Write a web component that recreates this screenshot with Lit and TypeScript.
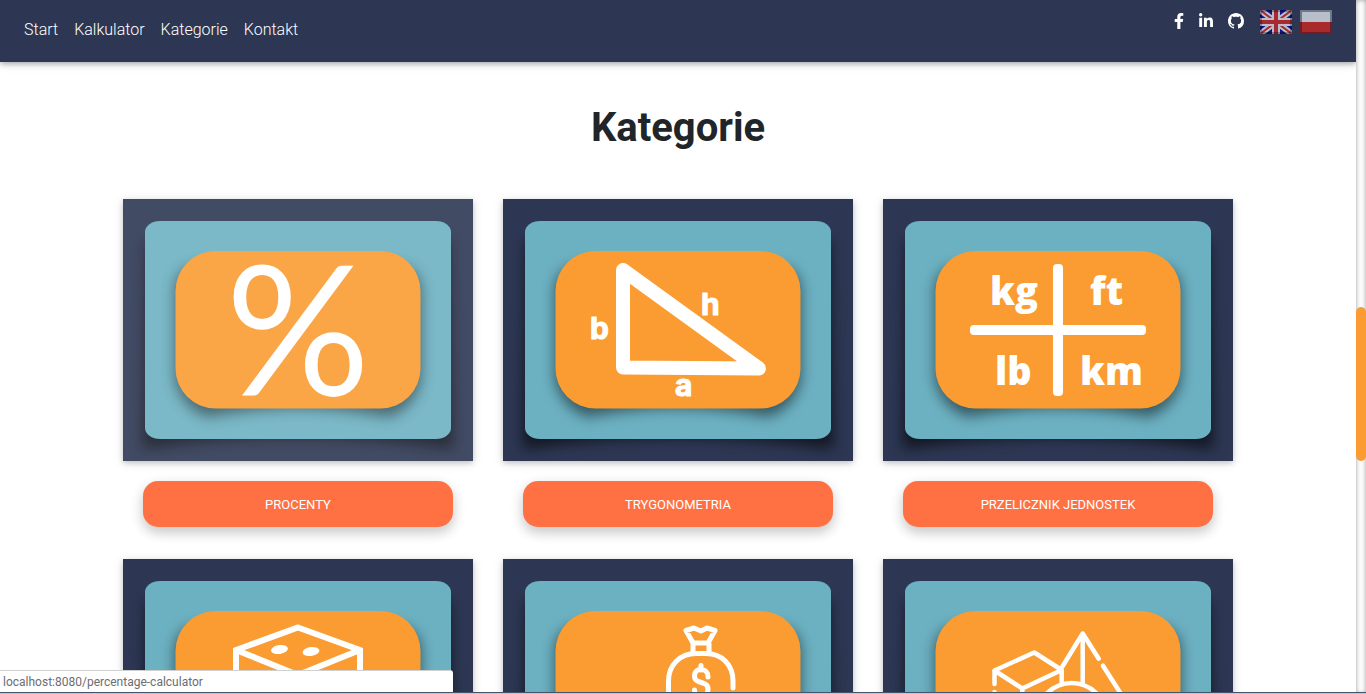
import { LitElement, html, svg, css, nothing } from "lit";
import { customElement, property } from "lit/decorators.js";

const percentArt = svg`<text class="percent" x="175" y="196" text-anchor="middle">%</text>`;

const triangleArt = svg`
  <path class="stroke" stroke-width="14" d="M120 71V168.500L256 169.500Z"/>
  <text class="side" x="87" y="140">b</text>
  <text class="side" x="198" y="116">h</text>
  <text class="side" x="172" y="197">a</text>`;

const unitsArt = svg`
  <rect class="fill" x="170" y="65" width="10" height="132" rx="4"/>
  <rect class="fill" x="87" y="126" width="176" height="10" rx="4"/>
  <text class="unit" x="107" y="106">kg</text>
  <text class="unit" x="207" y="106">ft</text>
  <text class="unit" x="112" y="186">lb</text>
  <text class="unit" x="197" y="186">km</text>`;

const dieArt = svg`
  <path class="miter" stroke-width="6" d="M175 68.500L237 91V166L175 192L113 166V91ZM113 91L175 116L237 91M175 116V192"/>
  <ellipse class="fill" cx="156.500" cy="90.500" rx="8.500" ry="4.500" transform="rotate(-8 156.500 90.500)"/>
  <ellipse class="fill" cx="188" cy="92.500" rx="8.500" ry="4.500" transform="rotate(-8 188 92.500)"/>`;

const bagArt = svg`
  <path class="stroke" stroke-width="5" d="M190 84L183 71.500L191 69L198 72L204 69L212 71.500L205 84ZM190 84V94M206 84V94"/>
  <path class="stroke" stroke-width="5" d="M165.500 165V122C165.500 106 177 94.500 193 94.500H203C219 94.500 230 106 230 122V129M165.500 165C165.500 184 230 184 230 165V140"/>
  <path class="stroke" stroke-width="5" d="M198 106.500V111M205 118C205 108 191.500 108 191.500 117C191.500 126 205 121 205 130C205 140 191.500 139 191.500 131M198 138V142"/>`;

const solidsArt = svg`
  <path class="stroke" stroke-width="4.500" d="M178.500 109L199.700 74.500L215.700 99.700M220 106.700L238 135M199.700 75V124M111.500 125V111.500L151.300 93.500L178.700 111V124M111.500 111.500L139.300 129.500L178.700 111M139.300 129.500V170M111.500 133V155L139.300 170"/>
  <circle class="stroke" stroke-width="4.500" cx="188.700" cy="159" r="35"/>`;

interface Category {
  name: string;
  label?: string;
  href: string;
  art: unknown;
  active?: boolean;
}

const categories: Category[] = [
  { name: "Procenty", label: "Procenty", href: "#percentage-calculator", art: percentArt, active: true },
  { name: "Trygonometria", label: "Trygonometria", href: "#trigonometry", art: triangleArt },
  { name: "Przelicznik jednostek", label: "Przelicznik jednostek", href: "#units", art: unitsArt },
  { name: "", href: "#probability", art: dieArt },
  { name: "", href: "#finance", art: bagArt },
  { name: "", href: "#geometry", art: solidsArt },
];

@customElement("category-card")
export class CategoryCard extends LitElement {
  @property({ attribute: false }) category!: Category;

  static styles = css`
    :host { display: flex; flex-direction: column; gap: 20px; }
    .picture {
      display: block;
      background: #2d3753;
      box-shadow: 0 2px 5px rgba(0, 0, 0, 0.16), 0 2px 10px rgba(0, 0, 0, 0.12);
    }
    svg { display: block; width: 100%; height: auto; }
    .fill, text { fill: #fff; }
    .stroke { fill: none; stroke: #fff; stroke-linejoin: round; stroke-linecap: round; }
    .miter { fill: none; stroke: #fff; stroke-linejoin: miter; }
    .percent { font: 400 180px Lato, sans-serif; }
    .side { font: 700 30px Inter, sans-serif; stroke: #fff; stroke-width: 1px; stroke-linejoin: round; }
    .unit { font: 800 38px "Open Sans", sans-serif; }
    .button {
      margin: 0 20px;
      border: 0;
      border-radius: 15px;
      padding: 15px 16px 13px;
      background: #ff7043;
      color: #fff;
      font: 400 13px/18px Roboto, sans-serif;
      text-transform: uppercase;
      box-shadow: 0 6px 12px rgba(0, 0, 0, 0.14), 0 4px 15px rgba(0, 0, 0, 0.1);
      cursor: pointer;
    }
  `;

  render() {
    const { name, label, href, art, active } = this.category;
    return html`
      <a class="picture" href=${href} aria-label=${name || nothing}>
        <svg viewBox="0 0 350 262" aria-hidden="true">
          <defs>
            <filter id="soft" x="-20%" y="-20%" width="140%" height="140%">
              <feGaussianBlur stdDeviation="7"/>
            </filter>
          </defs>
          <path filter="url(#soft)" opacity="0.600" d="M24 42H326L330 250Q175 226 20 250Z"/>
          <rect x="22" y="22" width="306" height="218" rx="15" ry="11" fill="#6cb1c2"/>
          <path filter="url(#soft)" opacity="0.500" d="M70 68H280Q296 72 298 90V180Q292 208 266 218Q175 200 84 218Q58 208 52 180V90Q54 72 70 68Z"/>
          <rect x="52.500" y="52" width="245" height="157.500" rx="40" ry="40" fill="#fa9c32"/>
          ${art}
          ${active ? svg`<rect width="350" height="262" fill="#fff" opacity="0.100"/>` : nothing}
        </svg>
      </a>
      ${label ? html`<button class="button" type="button">${label}</button>` : nothing}
    `;
  }
}

@customElement("app-root")
export class AppRoot extends LitElement {
  static styles = css`
    :host {
      display: grid;
      grid-template-columns: minmax(0, 1fr) 10px;
      height: 100vh;
      overflow: hidden;
      position: relative;
      background: #fff;
      color: #212529;
      font-family: Roboto, sans-serif;
    }
    .page { display: flex; flex-direction: column; min-height: 0; overflow: hidden; }
    .bar {
      display: flex;
      flex: none;
      justify-content: space-between;
      align-items: flex-start;
      box-sizing: border-box;
      height: 62px;
      padding: 10px 24px;
      background: #2d3753;
      box-shadow: 0 2px 5px rgba(0, 0, 0, 0.26), 0 2px 10px rgba(0, 0, 0, 0.12);
    }
    .links { display: flex; gap: 16px; padding-top: 8px; }
    .links a { color: #fff; font-weight: 300; font-size: 16px; line-height: 24px; text-decoration: none; }
    .tools { display: flex; gap: 8px; }
    .social { display: flex; gap: 15px; padding: 2px 8px 0 0; }
    .social a, .flag { display: block; }
    .social svg, .flag svg { display: block; }
    .social svg { height: 16px; width: auto; fill: #fff; margin-top: 1px; }
    .flag { border: 0; padding: 0; background: none; cursor: pointer; }
    .content {
      width: 100%;
      max-width: 1140px;
      box-sizing: border-box;
      margin: 0 auto;
      padding: 42px 15px 0;
    }
    .title { margin: 0 0 47px; text-align: center; font-weight: 700; font-size: 40px; line-height: 48px; }
    .grid { display: grid; grid-template-columns: repeat(3, minmax(0, 1fr)); gap: 32px 30px; }
    .track { display: flex; justify-content: center; background: #fff; box-shadow: inset 0 0 5px rgba(0, 0, 0, 0.4); }
    .thumb { width: 10px; height: 154px; margin-top: 307px; border-radius: 5px; background: #fa9c32; }
    .status {
      position: absolute;
      left: 0;
      bottom: 2px;
      box-sizing: border-box;
      width: 453px;
      padding: 2px 3px 1px;
      border-top: 1px solid #d0d0d0;
      border-top-right-radius: 3px;
      background: #fff;
      color: #6b6e72;
      font: 400 12px/18px Roboto, sans-serif;
    }
    .edge {
      position: absolute;
      left: 0;
      right: 0;
      bottom: 0;
      height: 1px;
      border-top: 1px solid #44546a;
      background: #b9c9dc;
    }
  `;

  render() {
    return html`
      <div class="page">
        <header class="bar">
          <nav class="links">
            <a href="#start">Start</a>
            <a href="#calculator">Kalkulator</a>
            <a href="#categories">Kategorie</a>
            <a href="#contact">Kontakt</a>
          </nav>
          <div class="tools">
            <div class="social">
              <a href="#facebook" aria-label="Facebook">
                <svg viewBox="0 0 320 512"><path d="M279.140 288l14.220-92.660h-88.910v-60.130c0-25.350 12.420-50.060 52.240-50.060h40.420V6.260S260.430 0 225.360 0c-73.220 0-121.080 44.380-121.080 124.720v70.620H22.890V288h81.390v224h100.170V288z"/></svg>
              </a>
              <a href="#linkedin" aria-label="LinkedIn">
                <svg viewBox="0 0 448 512"><path d="M100.280 448H7.400V148.900h92.880zM53.790 108.100C24.090 108.100 0 83.500 0 53.800a53.790 53.790 0 0 1 107.580 0c0 29.700-24.100 54.300-53.790 54.300zM447.900 448h-92.680V302.400c0-34.700-.7-79.200-48.290-79.200-48.290 0-55.690 37.700-55.690 76.700V448h-92.780V148.900h89.080v40.800h1.300c12.400-23.500 42.690-48.300 87.880-48.300 94 0 111.280 61.900 111.280 142.300V448z"/></svg>
              </a>
              <a href="#github" aria-label="GitHub">
                <svg viewBox="0 0 16 16"><path d="M8 0C3.580 0 0 3.580 0 8c0 3.540 2.290 6.530 5.470 7.590.4.070.55-.17.55-.38 0-.19-.01-.82-.01-1.490-2.010.37-2.530-.49-2.690-.94-.09-.23-.48-.94-.82-1.130-.28-.15-.68-.52-.01-.53.63-.01 1.080.58 1.230.82.72 1.210 1.870.87 2.330.66.07-.52.28-.87.51-1.070-1.780-.2-3.640-.89-3.640-3.950 0-.87.31-1.590.82-2.150-.08-.2-.36-1.020.08-2.120 0 0 .67-.21 2.200.82.64-.18 1.320-.27 2-.27s1.360.09 2 .27c1.530-1.040 2.200-.82 2.200-.82.44 1.100.16 1.920.08 2.120.51.56.82 1.270.82 2.150 0 3.070-1.870 3.750-3.650 3.950.29.25.54.73.54 1.480 0 1.070-.01 1.930-.01 2.200 0 .21.15.46.55.38A8.010 8.010 0 0 0 16 8c0-4.420-3.580-8-8-8z"/></svg>
              </a>
            </div>
            <button class="flag" type="button" aria-label="English">
              <svg width="32" height="24" viewBox="0 0 32 24">
                <clipPath id="uk"><rect width="32" height="24" rx="2"/></clipPath>
                <g clip-path="url(#uk)">
                  <rect width="32" height="24" fill="#14148c"/>
                  <path d="M0 0L32 24M32 0L0 24" stroke="#b8bfca" stroke-width="6"/>
                  <path d="M0 0L32 24M32 0L0 24" stroke="#a82a30" stroke-width="2"/>
                  <path d="M16 0V24M0 12H32" stroke="#b8bfca" stroke-width="8"/>
                  <path d="M16 0V24M0 12H32" stroke="#a82a30" stroke-width="4"/>
                  <rect x="1" y="1" width="30" height="22" fill="none" stroke="#000" stroke-opacity="0.300" stroke-width="2"/>
                </g>
              </svg>
            </button>
            <button class="flag" type="button" aria-label="Polski">
              <svg width="32" height="24" viewBox="0 0 32 24">
                <clipPath id="pl"><rect width="32" height="24" rx="2"/></clipPath>
                <g clip-path="url(#pl)">
                  <rect width="32" height="12" fill="#b8bfca"/>
                  <rect y="12" width="32" height="12" fill="#a82a2a"/>
                  <path d="M1 12V1H31V12" fill="none" stroke="#6d7889" stroke-width="2"/>
                  <path d="M1 12V23H31V12" fill="none" stroke="#751a22" stroke-width="2"/>
                </g>
              </svg>
            </button>
          </div>
        </header>
        <main class="content">
          <h1 class="title">Kategorie</h1>
          <div class="grid">
            ${categories.map((c) => html`<category-card .category=${c}></category-card>`)}
          </div>
        </main>
      </div>
      <div class="track"><div class="thumb"></div></div>
      <div class="status">localhost:8080/percentage-calculator</div>
      <div class="edge"></div>
    `;
  }
}
